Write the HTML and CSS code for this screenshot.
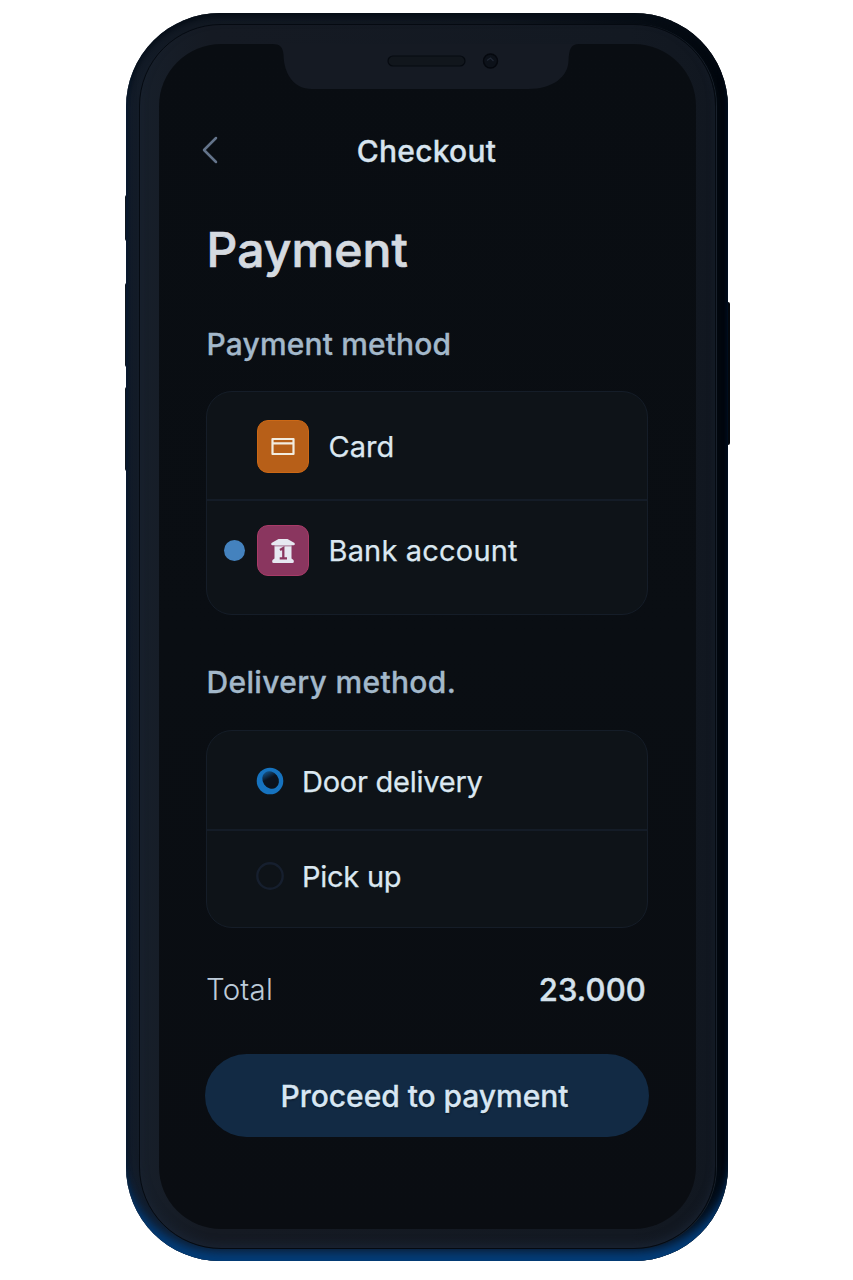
FILE: index.html
```
<!DOCTYPE html>
<html lang="en">
<head>
<meta charset="utf-8">
<title>Checkout</title>
<link rel="stylesheet" href="styles.css">
</head>
<body>
<div class="phone">
  <i class="key key-mute"></i><i class="key key-up"></i><i class="key key-down"></i><i class="key key-power"></i>
  <div class="shell">
  <div class="bezel">
    <main class="screen">
      <svg class="notch" width="307" height="46" viewBox="0 0 307 46">
        <path d="M0 0C8 0 11 3 11.500 11C12 29 21 45 40 45H256C282 45 296 32 296.500 17C297 5 299 0 307 0Z" fill="#151a23"/>
        <rect x="116" y="12" width="77" height="10" rx="5" fill="#11161c" stroke="#060a10" stroke-width="1.200"/>
        <circle cx="218.500" cy="17" r="7" fill="#0c1119" stroke="#05080e" stroke-width="1.400"/>
        <path d="M215 16.500l3.500-2.500 3 3" fill="none" stroke="#202734" stroke-width="1.300"/>
      </svg>
      <header class="bar">
        <svg class="back" width="18" height="28" viewBox="0 0 18 28"><path d="M15 2L3 14L15 26" fill="none" stroke="#64748b" stroke-width="2.500" stroke-linecap="round" stroke-linejoin="round"/></svg>
        <span class="bar-title">Checkout</span>
      </header>
      <h1 class="title"><span>Payment</span></h1>
      <h2 class="heading pay-heading"><span>Payment method</span></h2>
      <section class="panel pay-panel">
        <div class="row card-row">
          <span class="dot-slot"></span>
          <span class="tile orange"><svg width="26" height="20" viewBox="0 0 26 20"><path d="M2.500 2H23.500V17H2.500ZM2.500 6.300H23.500" fill="none" stroke="#f2ecdf" stroke-width="2.200" stroke-linejoin="round"/></svg></span>
          <span class="label card-label">Card</span>
        </div>
        <div class="row bank-row">
          <span class="dot-slot"><span class="dot"></span></span>
          <span class="tile pink"><svg width="26" height="28" viewBox="0 0 26 28"><path d="M8.500 2H17.500L24.500 6Q25.500 8 23.500 8.300H2.500Q.5 8 1.500 6Z M4.500 9.300H21.500V21.500L23.500 23Q24.500 26 22.500 26H3.500Q1.500 26 2.500 23L4.500 21.500Z" fill="#e6e8f1"/><path d="M4.500 8.800H21.500" stroke="#c9b8cc"/><path d="M10 13L13.300 11V20.500M9.700 21.300H17" fill="none" stroke="#8a365f" stroke-width="2.300"/></svg></span>
          <span class="label bank-label">Bank account</span>
        </div>
      </section>
      <h2 class="heading del-heading"><span>Delivery method.</span></h2>
      <section class="panel del-panel">
        <div class="row door-row">
          <svg class="radio" width="28" height="28" viewBox="0 0 28 28"><defs><linearGradient id="rg" x1=".6" y1="0" x2=".5" y2="1"><stop offset="0" stop-color="#145387"/><stop offset=".4" stop-color="#0b1420"/><stop offset="1" stop-color="#0b1119"/></linearGradient></defs><circle cx="14" cy="14" r="13.300" fill="#1673bf"/><ellipse cx="14.600" cy="13" rx="7.800" ry="9.300" transform="rotate(-35 14.600 13)" fill="url(#rg)"/></svg>
          <span class="label door-label">Door delivery</span>
        </div>
        <div class="row pick-row">
          <svg class="radio" width="28" height="28" viewBox="0 0 28 28"><circle cx="14" cy="14" r="12.700" fill="none" stroke="#161f2e" stroke-width="2.400"/></svg>
          <span class="label pick-label">Pick up</span>
        </div>
      </section>
      <div class="total"><span class="total-label">Total</span><span class="total-value">23.000</span></div>
      <button class="cta"><span>Proceed to payment</span></button>
    </main>
  </div>
  </div>
</div>
</body>
</html>
```
FILE: styles.css
```
* { box-sizing: border-box; }
body { margin: 0; height: 1280px; overflow: hidden; background: #fff; font-family: Inter, "Liberation Sans", sans-serif; }
.phone { position: relative; width: 601.5px; height: 1248px; margin: 13px 0 0 126px; }
.shell {
  position: relative; height: 100%; padding: 11px 12px 12px 13px; border-radius: 94px;
  background: linear-gradient(90deg, #131c29, #121923 10%, #10161f 60%, #030910 98%);
  box-shadow: inset 0 -13px 8px -5px #033c77, inset 0 -28px 22px -16px #0a2c55, inset 0 5px 6px -1px #060d16, inset -8px 0 6px -2px #01060d, inset 2px 0 3px -1px #0a1c30;
}
.key { position: absolute; width: 4px; background: #10161d; border-radius: 3px; }
.key-mute { left: -1px; top: 182px; height: 46px; }
.key-up { left: -1.5px; top: 270px; height: 84px; }
.key-down { left: -1.5px; top: 374px; height: 84px; }
.key-power { right: -2px; top: 289px; height: 143px; background: #05080d; }
.bezel {
  height: 100%; padding: 19px 19px 19px 18.5px; border: 1px solid #050a11; border-radius: 82px;
  background: linear-gradient(90deg, #171f2a, #151a23 12%, #131922 85%, #111720);
  box-shadow: 1px 0 0 #18202b, inset 0 -5px 10px -2px #1a2434;
}
.screen {
  position: relative; height: 100%; padding: 0 48px 0 47px; border-radius: 62px;
  display: flex; flex-direction: column;
  background: linear-gradient(180deg, #090d12, #0a0e13 50%, #0a0d12);
}
.notch { position: absolute; left: 113px; top: 0; }
.bar { position: relative; flex: none; display: flex; justify-content: center; margin-top: 88px; height: 38px; align-items: center; }
.back { position: absolute; left: -5px; top: 4px; }
.bar-title { font-size: 30px; font-weight: 500; letter-spacing: .25px; color: #d7e4ef; white-space: nowrap; -webkit-text-stroke: .3px; }
.title { margin: 43px 0 0; height: 72px; line-height: 74px; font-size: 48px; font-weight: 500; letter-spacing: .1px; color: #d5dae0; -webkit-text-stroke: .7px; }
.heading { margin: 0; height: 40px; line-height: 40px; font-size: 30px; font-weight: 500; letter-spacing: .15px; color: #a3b8ca; white-space: nowrap; -webkit-text-stroke: .3px; }
.title, .heading { flex: none; padding-left: 1px; }
.pay-heading { margin-top: 39px; }
.panel { flex: none; border: 1.5px solid #151d28; border-radius: 26px; background: #0e1318; overflow: hidden; }
.pay-panel { margin-top: 27px; height: 224px; }
.row { display: flex; align-items: center; }
.card-row { height: 109px; padding-top: 1px; border-bottom: 2px solid #141c27; }
.bank-row { height: 99px; }
.dot-slot { width: 50.500px; padding-left: 17.5px; flex: none; }
.dot { display: block; width: 21px; height: 21px; border-radius: 50%; background: #4482be; }
.tile { width: 52px; height: 53px; border-radius: 11px; flex: none; display: flex; align-items: center; justify-content: center; }
.orange { background: #b75f18; border: 1px solid #cc6815; }
.orange svg { margin-top: 2px; }
.pink { height: 51px; background: #8a365f; border: 1px solid #a83b68; }
.label { font-size: 29px; font-weight: 400; color: #dbe8f1; white-space: nowrap; -webkit-text-stroke: .25px; }
.card-label, .bank-label { margin-left: 19.500px; }
.card-label { padding-top: 1px; }
.bank-label { letter-spacing: .18px; }
.del-heading { margin-top: 47px; letter-spacing: .33px; }
.del-panel { margin-top: 28px; height: 198px; }
.radio { margin-left: 49.5px; flex: none; }
.door-row { height: 100px; padding-top: 2px; border-bottom: 2px solid #141c27; }
.pick-row { height: 89px; }
.door-label, .pick-label { margin-left: 18px; }
.door-label { letter-spacing: -.25px; }
.pick-label { padding-top: 2px; letter-spacing: -.25px; }
.total { flex: none; display: flex; justify-content: space-between; align-items: center; margin-top: 41px; height: 40px; padding: 0 1.5px 0 .5px; }
.total-label { font-size: 29.500px; font-weight: 300; color: #bdcbd9; letter-spacing: .2px; }
.total-value { font-size: 31px; font-weight: 500; letter-spacing: .15px; color: #d5e2ed; -webkit-text-stroke: .4px; }
.cta {
  flex: none; margin: 45px -1px 0; height: 83px; padding: 0 4px 0 0; border: 0; border-radius: 42px; background: #122a44;
  color: #d7e6f3; font: 500 30px Inter, "Liberation Sans", sans-serif; letter-spacing: -.05px; text-shadow: 0 1px 2px #07111d; -webkit-text-stroke: .3px;
}
```
